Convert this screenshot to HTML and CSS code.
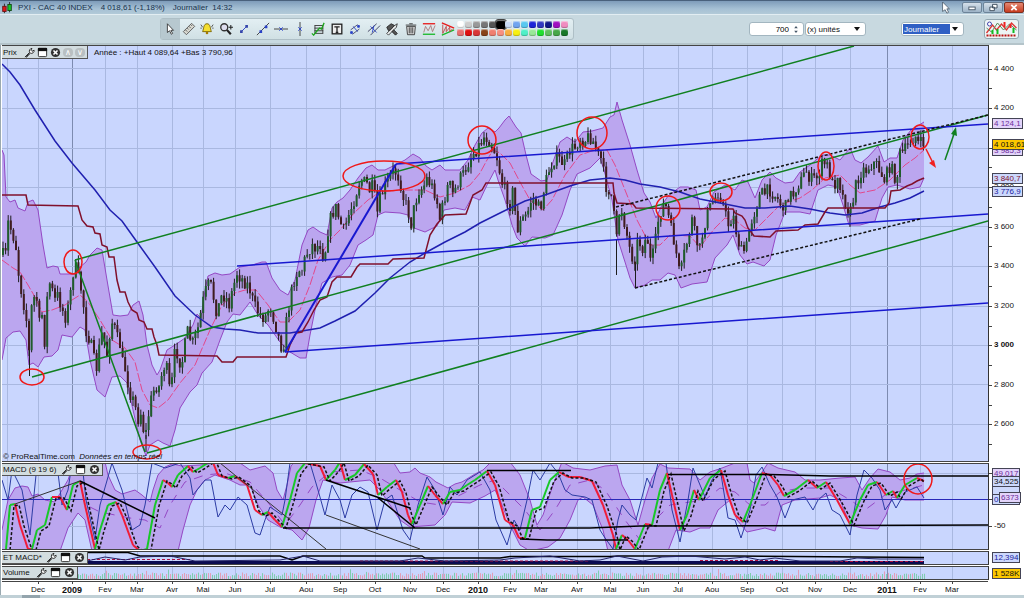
FILE: index.html
```html
<!DOCTYPE html>
<html lang="fr">
<head>
  <meta charset="UTF-8">
  <meta name="viewport" content="width=device-width, initial-scale=1.0">
  <title>PXI - CAC 40 INDEX</title>
  <link rel="stylesheet" href="styles.css">
</head>
<body>

<!-- shared icons -->
<svg class="sprite" aria-hidden="true">
  <symbol id="wrench" viewBox="0 0 12 12"><path d="M1 11l5-5M6.200 6a3 3 0 0 1 2.500-4.500L7.500 3.500l1.200 1.200L11 3.500A3 3 0 0 1 7 6.800L2.500 11.200z" fill="#fff" stroke="#222"/></symbol>
  <symbol id="window" viewBox="0 0 12 12"><rect x="1.500" y="1.500" width="9" height="9" rx="1" fill="#fff" stroke="#222"/><path d="M1 1h10v3.500H1z" fill="#111"/></symbol>
  <symbol id="close" viewBox="0 0 12 12"><circle cx="6" cy="6" r="5" fill="#333"/><path d="M3.800 3.800l4.400 4.400M8.200 3.800L3.800 8.200" stroke="#fff" stroke-width="1.700"/></symbol>
</svg>

<header class="titlebar">
  <svg class="logo" viewBox="0 0 14 14"><path d="M4 2v11M10 0v12" stroke="#222"/><rect x="2" y="5" width="4" height="6" fill="#e01818" stroke="#611"/><rect x="8" y="3" width="4" height="7" fill="#18c828" stroke="#141"/></svg>
  <span>PXI - CAC 40 INDEX</span>
  <span>4 018,61 (-1,18%)</span>
  <span>Journalier&nbsp; 14:32</span>
  <div class="window-buttons">
    <svg class="cursor" viewBox="0 0 10 14"><path d="M1 0v11l3-2 2 4 2-1-2-4h3z" fill="#fff" stroke="#345" stroke-width=".8"/></svg>
    <button aria-label="Réduire"><svg viewBox="0 0 18 10"><rect x="5.500" y="4.500" width="7" height="3" fill="#fff" stroke="#456"/></svg></button>
    <button aria-label="Restaurer"><svg viewBox="0 0 18 10"><path d="M8.500 1.500h5v4h-5zM5.500 4.500h5v4h-5z" fill="#fff" stroke="#345"/></svg></button>
    <button class="quit" aria-label="Fermer"><svg viewBox="0 0 18 10"><path d="M6 2l6 6M12 2L6 8" stroke="#fff" stroke-width="2"/></svg></button>
  </div>
</header>

<nav class="toolbar">
  <div class="tools">
    <div class="tool-list">
      <button class="active" aria-label="Pointeur"><svg viewBox="0 0 16 16"><path d="M5 2v10l2.500-2 2 4 1.500-1-2-3.500h3z" fill="#fff" stroke="#333"/></svg></button>
      <button aria-label="Règle"><svg viewBox="0 0 16 16"><path d="M1.500 11L11 1.500 14.500 5 5 14.500z" fill="#d8d8d0" stroke="#555"/><path d="M4 9l2 2M6 7l1.500 1.500M8 5l2 2M10 3l1.500 1.500" stroke="#555"/></svg></button>
      <button aria-label="Alarme"><svg viewBox="0 0 16 16"><path d="M8 2c4 0 3.500 5 5 9H3C4.500 7 4 2 8 2z" fill="#f5df30" stroke="#776000"/><circle cx="8" cy="12.500" r="1.500" fill="#a47a00"/><path d="M1 3l2 3M15 3l-2 3M.5 7H2M14 7h1.500" stroke="#444"/></svg></button>
      <button aria-label="Zoom"><svg viewBox="0 0 16 16"><circle cx="6" cy="6" r="4" fill="#dde" stroke="#333" stroke-width="1.500"/><path d="M9 9l4.500 5" stroke="#222" stroke-width="2.500"/><path d="M11 6h5M13.500 3.500v5" stroke="#222" stroke-width="1.200"/></svg></button>
      <button aria-label="Segment"><svg viewBox="0 0 16 16"><path d="M5 11l6-6" stroke="#2233cc"/><path d="M3.500 9.500h3v3h-3zM9.500 3.500h3v3h-3z" fill="#3344aa"/></svg></button>
      <button aria-label="Droite"><svg viewBox="0 0 16 16"><path d="M1 15L15 1" stroke="#333"/><path d="M4 9.500h3v3H4zM10 4h3v3h-3z" fill="#2840c8"/></svg></button>
      <button aria-label="Horizontale"><svg viewBox="0 0 16 16"><path d="M0 8h16" stroke="#333"/><path d="M6 6l4 4M10 6l-4 4" stroke="#2840c8"/></svg></button>
      <button aria-label="Verticale"><svg viewBox="0 0 16 16"><path d="M8 0v16" stroke="#333"/><path d="M6 6l4 4M10 6l-4 4" stroke="#2840c8"/></svg></button>
      <button aria-label="Retracement"><svg viewBox="0 0 16 16"><path d="M4 4h10M4 7h10M4 10h10M4 13h10M4.500 4v9M13.500 4v9" stroke="#333"/><path d="M7 10l3-3 2 1 3-7M1 13l2 2 4-5" fill="none" stroke="#1da51d" stroke-width="1.500"/></svg></button>
      <button aria-label="Texte"><svg viewBox="0 0 16 16"><rect x="2.500" y="2.500" width="11" height="11" fill="#eee" stroke="#222" stroke-width="1.500"/><path d="M5 5.500h6M8 5.500V12M6.500 12h3" stroke="#222" stroke-width="1.500"/></svg></button>
      <button aria-label="Parallèles"><svg viewBox="0 0 16 16"><path d="M3 9l8-6M5 14l8-6" stroke="#446"/><path d="M3 11h2v2H3zM11 4h2v2h-2zM6 5l5 6" fill="#2840c8" stroke="#2840c8"/></svg></button>
      <button aria-label="Canal"><svg viewBox="0 0 16 16"><path d="M1 11L11 2M4 15L15 4" stroke="#335"/><path d="M4 5l7 7M8 4l-2 8" stroke="#2840c8"/></svg></button>
      <button aria-label="Outils"><svg viewBox="0 0 16 16"><path d="M2 6l5-4 4 2-3 3 6 6-2 2-6-6-2 1z" fill="#555" stroke="#222"/><path d="M3 14L13 4" stroke="#eee" stroke-width="2"/><path d="M2 13l9-9 3-2-1 4-9 9z" fill="none" stroke="#333"/></svg></button>
      <button aria-label="Supprimer"><svg viewBox="0 0 16 16"><path d="M3 5h10l-1 9.500H4z" fill="#ddd" stroke="#333"/><path d="M2 3.500h12M6 2h4M6 6v7M8 6v7M10 6v7" stroke="#333"/></svg></button>
      <button aria-label="Support"><svg viewBox="0 0 16 16"><path d="M1 2h14" stroke="#e81818" stroke-width="1.500"/><path d="M1 14h14" stroke="#18b828" stroke-width="1.500"/><path d="M2 12l2-7 3 5 3-6 2 7 3-7" fill="none" stroke="#a77"/></svg></button>
      <button aria-label="Triangle"><svg viewBox="0 0 16 16"><path d="M1 1l14 6" stroke="#e81818" stroke-width="1.500"/><path d="M1 15l14-6" stroke="#18b828" stroke-width="1.500"/><path d="M2 3v10l4-8v6l4-5v5l3-3" fill="none" stroke="#b44"/></svg></button>
    </div>
    <div class="palette" id="palette"></div>
  </div>
  <div class="settings">
    <div class="field units">
      <input type="text" value="700" aria-label="Nombre d'unités">
      <svg class="spin" viewBox="0 0 6 10"><path d="M1 3.500L3 1l2 2.500zM1 6.500L3 9l2-2.500z" fill="#456"/></svg>
    </div>
    <div class="field drop">
      <select aria-label="Unité"><option>(x) unités</option></select>
    </div>
    <div class="field drop period">
      <select aria-label="Période"><option>Journalier</option></select>
    </div>
    <button class="chart-button" aria-label="Graphiques"><svg viewBox="0 0 32 16"><path d="M1 12l6-8 4 5 5-6 5 6 5-7 5 5" fill="none" stroke="#d33" stroke-width="1.300"/><path d="M1 7l5 4 6-9 6 7 6-6 7 6" fill="none" stroke="#5a8a5a"/><path d="M7 9v4M12 8v5M28 7v5" stroke="#1b2" stroke-width="2"/><path d="M19 1v5M25 3v4" stroke="#e22" stroke-width="2"/><path d="M1 14.500h30" stroke="#b11" stroke-width="2" stroke-dasharray="2 1"/><circle cx="4" cy="3" r="2" fill="#fff" stroke="#44a"/></svg></button>
  </div>
</nav>

<main class="charts">
  <section class="panel price">
    <div class="plot">
      <svg id="price" viewBox="2 46 986 415" preserveAspectRatio="none">
        <g class="grid"></g>
        <g class="series"></g>
        <g class="trend green">
          <path d="M75 260L854 46M32 377L988 115M147 453L988 221M75 260L145 452"/>
        </g>
        <g class="trend blue">
          <path d="M237 266L988 214M396 164L988 124M285 352L988 303"/>
          <path class="thick" d="M285 352L396 164"/>
        </g>
        <path class="dotted" d="M616 207L988 115M635 288L920 219"/>
        <g class="marks">
          <ellipse cx="73" cy="262" rx="9" ry="12"/>
          <ellipse cx="32" cy="377" rx="12" ry="8"/>
          <ellipse cx="147" cy="452" rx="14" ry="7"/>
          <ellipse cx="384" cy="176" rx="41" ry="15"/>
          <circle cx="482" cy="140" r="14"/>
          <ellipse cx="592" cy="133" rx="15" ry="16"/>
          <circle cx="668" cy="208" r="12"/>
          <ellipse cx="721" cy="192" rx="11" ry="9"/>
          <ellipse cx="826" cy="166" rx="8" ry="14"/>
          <ellipse cx="920" cy="137" rx="9" ry="12"/>
        </g>
        <path d="M926 149l7 14" stroke="#f02020" stroke-width="1.500"/><path d="M936 168l-7-5 5-3z" fill="#f02020"/>
        <path d="M945 160l9-26" stroke="#108020" stroke-width="1.500"/><path d="M956 127l1 9-6-2z" fill="#108020"/>
      </svg>
      <div class="head">Prix
        <button aria-label="Réglages"><svg><use href="#wrench"/></svg></button>
        <button aria-label="Fenêtre"><svg><use href="#window"/></svg></button>
        <button aria-label="Fermer"><svg><use href="#close"/></svg></button>
        <button class="move" aria-label="Monter">∧</button>
        <button class="move" aria-label="Descendre">∨</button>
      </div>
      <p class="info">Année : +Haut 4 089,64 +Bas 3 790,96</p>
      <p class="credit">© ProRealTime.com &nbsp;<em>Données en temps réel</em></p>
    </div>
    <div class="axis" id="price-axis"></div>
  </section>

  <section class="panel macd">
    <div class="plot">
      <svg id="macd" viewBox="2 464 986 85" preserveAspectRatio="none">
        <g class="grid"></g>
        <g class="series"></g>
        <path class="thin" d="M15 504L80 481M220 463L326 549M326 515L420 549"/>
        <path class="bold" d="M80 481L155 518M326 480L410 508M377 497L415 528M283 528L590 528L640 526L988 525M487 470.500H571M520 539L547 540H628M668 474.500H770L830 476H988"/>
        <g class="marks"><ellipse cx="918" cy="479" rx="14" ry="15"/></g>
      </svg>
      <div class="head wide">MACD (9 19 6)
        <button aria-label="Réglages"><svg><use href="#wrench"/></svg></button>
        <button aria-label="Fenêtre"><svg><use href="#window"/></svg></button>
        <button aria-label="Fermer"><svg><use href="#close"/></svg></button>
      </div>
    </div>
    <div class="axis" id="macd-axis"></div>
  </section>

  <section class="panel et">
    <div class="plot">
      <svg id="et" viewBox="2 552 986 12" preserveAspectRatio="none">
        <g class="grid"></g>
        <path d="M87 562.500H924" stroke="#0a0a50" stroke-width="3"/>
        <path d="M87 559.500H190M360 561H590M700 560.500H780M830 561.500H924" fill="none" stroke="#b01040" stroke-width="1" stroke-dasharray="3 2"/>
        <path d="M87 552.500H128L140 556H280L292 560L303 556H422L425 558H500L510 556.500H610L618 556L735 556L924 557.500" fill="none" stroke="#000" stroke-width="1.500"/>
        <path d="M87 561L105 557L125 560L140 557L170 556L195 561L280 560L303 556L320 561L400 561L418 558L445 561L500 560L515 558L550 556L580 561L600 560L617 556L643 561L662 557L690 556L725 559L745 557L760 560L775 558L800 561L840 561L857 558L880 559L924 559" fill="none" stroke="#226"/>
      </svg>
      <div class="head">ET MACD*
        <button aria-label="Réglages"><svg><use href="#wrench"/></svg></button>
        <button aria-label="Fenêtre"><svg><use href="#window"/></svg></button>
        <button aria-label="Fermer"><svg><use href="#close"/></svg></button>
      </div>
    </div>
    <div class="axis" id="et-axis"></div>
  </section>

  <section class="panel volume">
    <div class="plot">
      <svg id="volume" viewBox="2 567 986 13" preserveAspectRatio="none">
        <g class="grid"></g>
        <g class="series"></g>
      </svg>
      <div class="head">Volume
        <button aria-label="Réglages"><svg><use href="#wrench"/></svg></button>
        <button aria-label="Fenêtre"><svg><use href="#window"/></svg></button>
        <button aria-label="Fermer"><svg><use href="#close"/></svg></button>
      </div>
    </div>
    <div class="axis" id="volume-axis"></div>
  </section>

  <div class="months" id="months"></div>
</main>

<footer class="scrollbar"><span></span></footer>

<script src="chart.js"></script>
</body>
</html>
```
FILE: styles.css
```css
* {
  box-sizing: border-box;
}

body {
  margin: 0;
  min-height: 100vh;
  display: flex;
  flex-direction: column;
  background: #c6d6dc;
  font-family: "Liberation Sans", Arial, sans-serif;
  font-size: 8px;
  color: #111;
}

button {
  padding: 0;
  border: 0;
  background: none;
  font: inherit;
}

svg {
  display: block;
}

p {
  margin: 0;
}

.sprite {
  position: absolute;
  width: 0;
  height: 0;
}

/* title bar */
.titlebar {
  height: 14px;
  display: flex;
  align-items: center;
  gap: 8px;
  padding-left: 1px;
  border-top: 1px solid #49617c;
  background: linear-gradient(#7e9cba, #a5c0d4 60%, #b2cad8);
  color: #18324c;
}

.logo {
  width: 12px;
  height: 12px;
  margin-right: -3px;
}

.window-buttons {
  display: flex;
  align-items: center;
  gap: 1px;
  margin-left: auto;
}

.window-buttons button {
  width: 20px;
  height: 11px;
  border: 1px solid #6d8499;
  border-radius: 2px;
  background: linear-gradient(#d5e0ea, #9eb4c8);
}

.window-buttons .quit {
  border-color: #803020;
  background: linear-gradient(#e58a74, #c83c20);
}

.window-buttons svg {
  width: 100%;
  height: 9px;
}

.window-buttons .cursor {
  width: 10px;
  height: 12px;
  margin-right: 10px;
}

/* toolbar */
.toolbar {
  height: 31px;
  display: flex;
  align-items: center;
  justify-content: space-between;
  padding: 0 5px 0 160px;
  border-top: 1px solid #e2edf2;
  border-bottom: 2px solid #b4c4ca;
  background: #c8d9e0;
}

.tools {
  display: flex;
  align-items: center;
  height: 22px;
  padding-right: 4px;
  border: 1px solid #aebfc6;
  border-radius: 3px;
  background: linear-gradient(#e3eff3, #d0e0e4);
}

.tool-list {
  width: 296px;
  height: 20px;
  display: grid;
  grid-template-columns: repeat(16, 1fr);
}

.tool-list button {
  display: grid;
  place-items: center;
}

.tool-list .active {
  background: #b7c8cf;
}

.tool-list svg {
  width: 14px;
  height: 14px;
  fill: none;
}

.palette {
  display: grid;
  grid-template-columns: repeat(14, 8px);
  grid-auto-rows: 8px;
}

.swatch {
  margin: 0 1px 1px 0;
  border-radius: 2px;
  box-shadow: inset 0 1px 1px rgba(255, 255, 255, 0.5), inset 0 -1px 1px rgba(0, 0, 0, 0.25);
}

.swatch.current {
  margin: -1px -1px 0 -1px;
  background: #000;
  outline: 1px solid #444;
}

.settings {
  display: flex;
  align-items: center;
}

.field {
  display: flex;
  align-items: center;
  height: 14px;
  border: 1px solid #a3b6c0;
  border-radius: 3px;
  background: #fff;
}

.units {
  width: 55px;
}

.field input {
  flex: 1;
  min-width: 0;
  border: 0;
  padding: 0 0 0 2px;
  background: none;
  font: inherit;
  text-align: right;
}

.spin {
  width: 6px;
  height: 9px;
  margin: 0 4px;
}

.drop {
  position: relative;
  width: 61px;
  margin-left: 1px;
}

.drop select {
  width: 100%;
  height: 12px;
  padding: 0 12px 0 1px;
  border: 0;
  appearance: none;
  background: none;
  font: inherit;
  color: #111;
}

.drop::after {
  content: "";
  position: absolute;
  right: 5px;
  top: 4px;
  border: 3px solid transparent;
  border-top: 4px solid #111;
  border-bottom: 0;
}

.period {
  width: 63px;
  margin-left: 35px;
  padding: 0 1px;
}

.period select {
  height: 10px;
  background: linear-gradient(90deg, #2f5fc4 47px, #fff 47px);
  color: #fff;
}

.chart-button {
  width: 35px;
  height: 20px;
  margin-left: 20px;
  border: 1px solid #92a6b0;
  border-radius: 3px;
  background: #edf4f5;
}

.chart-button svg {
  width: 100%;
  height: 16px;
}

/* chart panels */
.charts {
  flex: 1;
  display: flex;
  flex-direction: column;
  gap: 1px;
  padding-left: 1px;
  border-left: 1px solid #9aa9b0;
  background: #fff;
}

.panel {
  display: grid;
  grid-template-columns: 1fr 35px;
}

.price {
  flex: 1;
}

.macd {
  height: 87px;
}

.et {
  height: 14px;
}

.volume {
  height: 14px;
}

.plot {
  position: relative;
  min-height: 0;
  border-top: 1px solid #444;
  border-bottom: 1px solid #444;
  border-right: 1px solid #333;
  background: #c9d6fe;
}

.plot > svg {
  position: absolute;
  width: 100%;
  height: 100%;
}

.grid line {
  stroke: #a9b8e0;
}

.grid .year {
  stroke: #7d8bb0;
}

.band {
  fill: #bba6ef;
  stroke: none;
}

.edge {
  fill: none;
  stroke: #9448c4;
  stroke-width: 1;
}

.middle {
  fill: none;
  stroke: #e2488c;
  stroke-width: 1;
  stroke-dasharray: 9 2;
}

.average {
  fill: none;
  stroke: #2020b0;
  stroke-width: 1.5;
}

.stop {
  fill: none;
  stroke: #80102c;
  stroke-width: 1.5;
}

.wick {
  fill: none;
  stroke: #1c1c1c;
  stroke-width: 1;
}

.up {
  fill: none;
  stroke: #205c2c;
  stroke-width: 2;
}

.down {
  fill: none;
  stroke: #401c20;
  stroke-width: 2;
}

.trend path {
  fill: none;
  stroke-width: 1.5;
}

.green path {
  stroke: #108020;
}

.blue path {
  stroke: #1818d0;
}

.blue .thick {
  stroke-width: 2;
}

.dotted {
  fill: none;
  stroke: #111;
  stroke-width: 1.5;
  stroke-dasharray: 3 2;
}

.marks ellipse,
.marks circle {
  fill: none;
  stroke: #f01818;
  stroke-width: 1.5;
}

.rise {
  fill: none;
  stroke: #18c828;
  stroke-width: 2;
}

.fall {
  fill: none;
  stroke: #f01c38;
  stroke-width: 2;
}

.signal {
  fill: none;
  stroke: #111;
  stroke-width: 1.5;
  stroke-dasharray: 3 2;
}

.oscillator {
  fill: none;
  stroke: #2c3ca4;
}

.zero {
  stroke: #2828b8;
}

.thin {
  fill: none;
  stroke: #333;
}

.bold {
  fill: none;
  stroke: #000;
  stroke-width: 1.5;
}

.buy {
  stroke: #7cccac;
}

.sell {
  stroke: #e29cb4;
}

/* title strip lying over each plot */
.head {
  position: absolute;
  top: 0;
  left: 0;
  display: flex;
  align-items: center;
  gap: 3px;
  height: 12px;
  padding: 0 2px 0 1px;
  border: 1px solid #555;
  border-top: 0;
  border-left: 0;
  background: #d3dde0;
  white-space: nowrap;
}

.price .head {
  width: 86px;
  height: 13px;
  gap: 2px;
}

.head button:first-of-type {
  margin-left: auto;
}

.head svg {
  width: 11px;
  height: 11px;
}

.wide {
  width: 101px;
}

.et .head {
  width: 86px;
}

.volume .head {
  width: 76px;
}

.move {
  width: 10px;
  height: 9px;
  border-radius: 4px;
  background: #b9c0c2;
  color: #fff;
  line-height: 9px;
}

.info {
  position: absolute;
  top: 2px;
  left: 92px;
}

.credit {
  position: absolute;
  bottom: 0;
  left: 1px;
}

/* axes */
.axis {
  position: relative;
}

.label {
  position: absolute;
  left: 5px;
  height: 10px;
  margin-top: -5px;
  line-height: 10px;
  white-space: nowrap;
}

.tick {
  position: absolute;
  left: 0;
  width: 3px;
  height: 1px;
  background: #444;
}

.strong {
  font-weight: bold;
}

.box {
  left: 3px;
  height: 11px;
  padding: 0 1px;
  line-height: 9px;
  border: 1px solid #445;
  background: #ccd8fc;
}

.purple {
  background: #e3d4fa;
  color: #6b2c9c;
}

.red {
  color: #80102c;
}

.navy {
  color: #2020a0;
}

.yellow {
  background: #fcc800;
  color: #111;
}

.full {
  width: 28px;
}

.inner {
  left: 10px;
}

.months {
  position: relative;
  height: 14px;
  margin-right: 36px;
  border-top: 1px solid #444;
}

.month {
  position: absolute;
  top: 3px;
  width: 30px;
  margin-left: -15px;
  text-align: center;
  line-height: 10px;
}

.month::before {
  content: "";
  position: absolute;
  left: 15px;
  top: -3px;
  height: 2px;
  border-left: 1px solid #444;
}

.month.strong {
  font-size: 9px;
}

.scrollbar {
  height: 3px;
  padding-left: 22px;
  background: #c0d0d6;
}

.scrollbar span {
  display: block;
  width: 18px;
  height: 3px;
  background: #93a4ac;
}
```
FILE: chart.js
```js
const NS = 'http://www.w3.org/2000/svg';

const months = [
  [38, 'Dec'], [72, '2009'], [105, 'Fev'], [137, 'Mar'], [172, 'Avr'], [203, 'Mai'],
  [235, 'Jun'], [270, 'Jul'], [306, 'Aou'], [340, 'Sep'], [375, 'Oct'], [410, 'Nov'],
  [443, 'Dec'], [478, '2010'], [510, 'Fev'], [541, 'Mar'], [577, 'Avr'], [610, 'Mai'],
  [643, 'Jun'], [678, 'Jul'], [712, 'Aou'], [747, 'Sep'], [782, 'Oct'], [815, 'Nov'],
  [850, 'Dec'], [887, '2011'], [920, 'Fev'], [952, 'Mar']
];

const price = '3,255 5,262 9,213 12,240 15,232 17,262 20,283 23,300 26,315 29,352 31,310 34,298 37,300 40,330 42,315 45,345 47,300 50,282 52,290 55,300 58,295 61,305 65,318 68,308 71,290 73,273 75,265 77,273 80,283 83,300 86,330 90,340 94,360 96,372 99,350 101,332 104,340 107,355 110,330 113,320 116,335 120,345 123,365 126,370 129,390 133,400 136,410 139,422 141,412 145,440 147,425 150,405 153,392 157,385 160,388 163,365 167,370 170,393 173,375 175,350 179,355 181,370 184,350 188,330 192,345 196,335 199,325 202,305 206,290 210,282 213,295 217,313 221,297 225,295 229,305 233,288 237,273 241,278 247,284 250,290 254,305 260,315 265,318 270,305 275,322 280,343 283,350 286,325 290,300 294,280 298,270 302,270 306,255 312,245 316,248 320,243 324,260 328,230 332,213 336,208 340,222 344,232 348,217 353,203 357,190 360,180 364,182 368,185 371,195 373,182 377,215 380,200 384,188 388,182 392,172 397,172 401,185 404,200 408,210 411,225 415,203 419,190 423,188 427,178 432,187 436,195 440,220 444,200 449,182 453,195 459,180 463,175 467,165 472,155 478,147 484,137 488,138 493,147 498,160 501,180 505,190 510,205 513,190 517,230 522,220 527,215 532,197 537,205 540,210 545,185 550,167 555,158 560,160 565,165 570,150 575,147 580,138 585,140 590,136 595,145 598,155 602,160 605,185 609,190 613,200 616,250 618,215 622,210 626,230 630,250 634,262 638,240 643,248 647,235 651,265 655,245 659,215 663,205 667,208 670,225 675,245 680,278 684,255 688,238 692,220 696,240 700,250 704,225 709,210 714,200 719,190 723,205 728,225 733,215 737,235 741,252 746,250 750,225 755,210 760,195 765,193 770,190 775,195 780,203 785,210 788,195 793,195 797,185 802,180 806,170 811,180 817,178 822,165 826,163 829,170 832,185 835,183 838,172 842,195 847,205 850,215 854,195 857,180 862,170 866,170 872,163 877,165 882,175 885,180 890,165 894,175 897,180 899,155 903,152 907,148 911,140 915,135 919,145 924,142';
const upper = '2,150 4,155 6,197 10,202 15,200 18,208 25,211 28,202 33,200 38,210 43,245 47,268 53,266 58,267 60,274 75,274 80,267 86,262 90,255 97,248 102,250 107,280 113,315 120,316 128,315 133,305 139,301 143,315 147,345 152,365 157,375 160,370 167,350 175,345 185,338 193,325 197,314 201,318 205,290 208,276 215,273 222,275 230,274 240,267 252,265 262,262 266,262 272,278 280,290 288,295 295,280 302,245 308,230 313,227 320,232 327,235 332,208 337,202 343,198 350,190 358,178 366,168 372,165 378,170 385,170 395,165 405,160 413,154 420,158 426,166 432,170 440,165 445,170 460,170 468,160 475,145 482,133 488,128 495,132 499,128 505,120 509,116 516,127 521,133 526,155 531,174 541,181 547,180 553,162 560,142 567,137 575,142 583,132 592,131 603,128 610,117 614,115 617,102 622,120 630,145 637,170 644,193 650,202 656,218 662,205 668,196 680,187 688,187 696,190 700,210 707,207 714,192 725,185 735,190 742,180 748,182 755,198 762,180 770,172 776,178 785,183 793,182 800,172 810,165 822,155 830,155 840,160 850,148 855,160 861,163 868,157 878,146 884,162 890,158 897,158 903,140 911,130 924,122';
const lower = '2,360 6,338 13,332 20,331 26,340 29,365 33,363 38,367 44,357 52,356 58,350 62,335 72,337 80,327 85,330 90,360 97,390 105,397 112,377 120,376 127,383 133,410 140,440 146,456 150,445 158,440 163,443 170,446 175,430 180,408 190,392 197,385 202,373 212,362 220,340 227,322 233,314 240,315 250,302 258,315 268,325 280,342 290,352 300,358 306,358 310,335 316,305 322,283 332,277 342,275 350,265 358,245 366,240 373,235 378,215 385,212 400,213 408,215 414,228 425,232 437,226 444,210 455,208 465,210 472,197 480,200 487,185 495,170 498,180 505,200 512,225 517,238 525,246 532,237 545,238 553,235 562,215 570,190 577,174 590,168 600,158 604,170 612,200 618,240 625,262 630,278 635,288 645,285 652,280 660,280 668,273 675,275 681,288 692,284 707,282 715,258 727,245 733,235 740,255 747,264 753,262 764,266 770,260 776,235 785,212 800,212 810,214 818,190 828,185 837,187 843,205 849,225 860,225 875,221 882,198 888,187 897,185 910,189 920,187 924,178';
const middle = '2,260 13,268 20,272 28,285 35,297 42,312 52,310 65,305 72,300 80,295 88,302 100,320 112,340 125,348 135,362 142,390 150,405 158,408 168,400 180,383 195,365 210,330 222,305 235,293 245,290 256,290 268,305 280,322 288,322 300,310 310,285 318,260 330,240 340,230 355,212 368,200 380,192 400,190 425,190 440,197 455,193 470,185 480,173 487,160 493,150 500,153 510,163 520,182 530,200 543,210 552,200 565,175 580,155 595,150 607,150 615,165 625,190 637,220 650,245 660,245 670,235 690,236 700,247 715,228 725,218 735,220 745,228 755,230 765,220 780,205 800,198 812,190 825,178 840,175 850,185 860,193 875,190 890,180 905,165 915,158 924,150';
const average = '2,64 10,72 20,85 35,110 55,141 72,163 95,190 110,210 122,221 137,242 155,267 175,296 195,315 212,327 225,329 240,330 258,333 290,333 320,328 335,321 355,311 375,293 390,278 410,262 425,253 445,242 465,232 480,223 500,213 525,201 545,195 570,186 590,180 610,178 625,180 640,184 660,187 680,192 700,199 720,203 745,208 765,208 790,206 810,209 830,213 845,215 862,213 880,207 895,203 910,198 924,191';
const stop = '2,195 26,195 28,205 78,206 82,220 87,226 93,227 95,233 100,234 102,245 107,247 109,257 114,257 117,280 120,292 125,292 128,302 132,310 137,313 139,320 144,322 147,329 152,329 154,337 157,345 159,355 217,356 222,362 233,362 237,357 286,357 290,345 296,333 302,332 308,322 314,310 320,300 327,297 332,282 337,277 351,277 357,267 360,264 388,264 393,259 424,258 430,235 437,224 445,215 466,214 473,195 482,190 486,183 613,183 614,193 617,203 633,204 636,208 733,209 735,213 742,216 745,220 748,228 754,236 770,237 776,231 798,230 805,225 818,224 825,212 828,208 885,208 889,203 891,191 900,190 907,186 912,184 917,181 924,178';

const macd = '6,549 10,505 15,504 20,525 28,549 32,549 37,530 45,525 52,497 60,497 67,510 73,485 80,481 85,505 95,549 100,530 108,505 116,502 122,515 133,545 140,551 147,549 155,505 163,480 168,483 172,487 178,475 188,466 193,472 200,468 212,460 218,475 228,478 235,476 247,485 255,510 262,515 268,512 275,520 282,527 290,500 297,473 305,463 320,466 326,480 335,470 340,462 345,480 355,475 364,464 373,474 378,495 387,487 396,480 402,492 408,515 412,524 420,505 428,486 435,495 443,504 450,492 460,490 467,485 475,480 487,471 495,485 505,520 513,525 519,538 525,538 532,510 540,507 550,480 559,472 568,477 580,477 592,481 603,505 613,535 616,549 622,535 628,540 635,549 645,524 652,525 660,490 667,473 672,495 680,530 687,515 694,490 699,500 710,478 721,470 728,495 735,515 743,522 750,505 762,473 770,475 778,485 784,496 795,490 808,480 817,488 826,482 837,500 850,524 860,500 868,485 877,482 886,495 893,491 897,498 905,485 917,478 924,481';
const macdUpper = '2,530 8,500 15,488 22,486 28,487 32,496 38,494 45,500 55,502 62,490 68,480 74,462 105,462 108,475 115,490 122,494 135,490 142,495 150,502 153,490 158,475 165,467 172,464 182,466 200,465 215,463 240,463 250,470 265,466 273,473 277,490 283,500 287,485 291,466 296,460 392,460 400,473 410,472 415,468 420,473 430,477 436,482 448,488 455,484 462,482 475,474 483,470 493,460 510,462 520,475 530,500 537,525 543,515 553,485 562,462 573,468 590,470 605,466 617,465 622,485 630,500 638,525 645,500 652,478 660,464 668,468 690,469 700,480 710,472 722,468 735,463 747,463 750,480 754,483 760,475 768,463 778,468 795,472 805,480 820,480 840,478 855,477 862,490 870,478 878,469 890,472 900,480 910,478 917,474 924,473';
const macdLower = '2,551 60,551 68,528 78,513 85,520 92,551 178,551 183,530 190,505 197,490 205,480 215,475 230,480 240,485 250,485 258,505 268,520 280,527 292,530 302,540 309,528 316,500 323,480 340,483 370,480 380,490 390,505 400,520 410,527 435,525 445,515 452,502 470,503 485,496 495,490 500,500 510,525 520,545 530,551 548,547 560,538 570,520 578,500 583,497 593,505 603,530 608,551 668,551 676,530 690,532 700,528 710,528 718,510 730,500 737,520 747,532 765,528 775,531 782,505 795,500 820,498 830,495 840,500 850,525 862,528 878,529 886,515 892,497 905,500 924,500';
const oscillator = '2,480 8,500 12,470 22,490 30,535 37,465 43,475 48,463 57,465 62,505 68,490 72,463 82,463 86,500 95,540 100,505 112,463 122,490 132,530 140,525 145,505 152,463 165,468 180,463 190,478 193,495 205,480 211,480 218,517 225,505 230,510 238,497 247,505 255,533 260,535 265,520 270,507 282,515 285,500 290,463 310,463 318,490 325,515 332,485 340,500 345,518 352,495 360,487 368,492 377,530 385,500 392,495 403,530 410,540 418,505 427,477 435,490 443,515 450,487 457,495 467,480 480,472 490,490 496,520 507,545 514,520 520,530 527,500 533,470 540,480 550,463 558,473 565,490 572,495 585,497 592,500 600,530 605,538 613,549 618,520 622,505 630,515 636,520 647,478 652,488 658,463 666,463 672,510 680,542 688,500 693,468 705,497 712,480 720,468 728,518 735,520 741,538 750,510 756,475 762,467 770,485 777,497 785,518 792,500 805,497 813,510 818,500 826,493 832,510 840,515 850,535 857,495 864,470 872,478 880,490 885,510 892,500 896,508 905,492 917,487 924,498';
const macdMiddle = '90,507 100,512 115,515 130,518 145,520 160,528 170,505 185,482 205,475 225,473 250,482 270,505 285,525 300,505 312,487 330,472 360,470 380,478 400,490 420,502 440,505 460,495 480,485 495,480 510,495 525,510 540,530 555,510 570,485 590,480 605,490 625,520 640,540 655,520 670,505 690,502 705,500 720,488 735,492 750,505 765,505 780,492 800,488 830,488 850,500 865,510 885,495 905,490 924,485';

function parse(text) {
  return text.split(' ').map(p => p.split(',').map(Number));
}

function add(parent, tag, attrs) {
  const el = document.createElementNS(NS, tag);
  for (const key in attrs) el.setAttribute(key, attrs[key]);
  parent.appendChild(el);
  return el;
}

// repeatable noise, so the bars are the same at each load
let seed = 7;
function noise() {
  seed = (seed * 16807) % 2147483647;
  return seed / 2147483647;
}

function valueAt(points, x) {
  for (let i = 1; i < points.length; i++) {
    if (x <= points[i][0]) {
      const [x0, y0] = points[i - 1];
      const [x1, y1] = points[i];
      return y0 + (y1 - y0) * (x - x0) / (x1 - x0);
    }
  }
  return points[points.length - 1][1];
}

function drawGrid(id, rows) {
  const svg = document.getElementById(id);
  const grid = svg.querySelector('.grid');
  const box = svg.viewBox.baseVal;
  [[7, '']].concat(months).forEach(([x, name]) => {
    add(grid, 'line', {
      x1: x + 0.5, x2: x + 0.5, y1: box.y, y2: box.y + box.height,
      class: name.startsWith('20') ? 'year' : ''
    });
  });
  rows.forEach(y => add(grid, 'line', { x1: 2, x2: 988, y1: y + 0.5, y2: y + 0.5 }));
}

function drawBand(group, top, bottom) {
  const back = parse(bottom).reverse().map(p => p.join(',')).join(' ');
  add(group, 'polygon', { points: top + ' ' + back, class: 'band' });
  add(group, 'polyline', { points: top, class: 'edge' });
  add(group, 'polyline', { points: bottom, class: 'edge' });
}

function drawPrice() {
  drawGrid('price', [68, 108, 148, 187, 226, 266, 306, 345, 384, 424]);
  const group = document.querySelector('#price .series');
  drawBand(group, upper, lower);
  add(group, 'polyline', { points: middle, class: 'middle' });

  const points = parse(price);
  let wick = '', up = '', down = '';
  let last = points[0][1];
  for (let x = 3; x <= 924; x += 2.6) {
    const close = valueAt(points, x) + (noise() - 0.5) * 14;
    const high = Math.min(last, close) - noise() * 7;
    const low = Math.max(last, close) + noise() * 7;
    wick += `M${x.toFixed(1)} ${high.toFixed(1)}V${low.toFixed(1)}`;
    const body = `M${x.toFixed(1)} ${last.toFixed(1)}V${close.toFixed(1)}`;
    if (close < last) up += body; else down += body;
    last = close;
  }
  wick += 'M29.5 350V376M616.5 240V275M635.5 262V287M850 210V227M146 435V452';
  add(group, 'path', { d: wick, class: 'wick' });
  add(group, 'path', { d: down, class: 'down' });
  add(group, 'path', { d: up, class: 'up' });
  add(group, 'polyline', { points: average, class: 'average' });
  add(group, 'polyline', { points: stop, class: 'stop' });
}

function drawMacd() {
  drawGrid('macd', [473, 526]);
  const group = document.querySelector('#macd .series');
  drawBand(group, macdUpper, macdLower);
  add(group, 'polyline', { points: macdMiddle, class: 'edge', 'stroke-dasharray': '9 8' });
  add(group, 'line', { x1: 2, x2: 988, y1: 499.5, y2: 499.5, class: 'zero' });
  add(group, 'polyline', { points: oscillator, class: 'oscillator' });
  const points = parse(macd);
  for (let i = 1; i < points.length; i++) {
    const [x0, y0] = points[i - 1];
    const [x1, y1] = points[i];
    add(group, 'path', { d: `M${x0} ${y0}L${x1} ${y1}`, class: y1 < y0 ? 'rise' : 'fall' });
  }
  const signal = points.map(([x, y]) => [Math.min(x + 4, 924), y + 1].join(',')).join(' ');
  add(group, 'polyline', { points: signal, class: 'signal' });
}

function drawVolume() {
  drawGrid('volume', []);
  const group = document.querySelector('#volume .series');
  for (let x = 78; x <= 924; x += 2) {
    const h = 3 + noise() * 4 + (noise() > 0.95 ? 4 : 0);
    add(group, 'line', {
      x1: x + 0.5, x2: x + 0.5, y1: 580, y2: (580 - h).toFixed(1),
      class: noise() > 0.5 ? 'buy' : 'sell'
    });
  }
}

// labels sit at their value's share of the axis height
function drawAxis(id, top, height, labels, ticks) {
  const axis = document.getElementById(id);
  ticks.forEach(y => {
    const tick = document.createElement('i');
    tick.className = 'tick';
    tick.style.top = (y - top) / height * 100 + '%';
    axis.appendChild(tick);
  });
  labels.forEach(([y, text, cls]) => {
    const label = document.createElement('span');
    label.className = 'label ' + (cls || '');
    label.textContent = text;
    label.style.top = (y - top) / height * 100 + '%';
    axis.appendChild(label);
  });
}

function drawMonths() {
  const row = document.getElementById('months');
  months.forEach(([x, name]) => {
    const label = document.createElement('span');
    label.className = 'month' + (name.startsWith('20') ? ' strong' : '');
    label.textContent = name;
    label.style.left = (x - 2) / 986 * 100 + '%';
    row.appendChild(label);
  });
}

function drawPalette() {
  const colors = ['#fff', '#ccc', '#999', '#777', '#555', '#000', '#cbdcf6', '#70a4f0', '#58c8f0', '#1c24d8', '#3038c0', '#101888', '#a010c0', '#f08cc0',
    '#e87070', '#e01010', '#d83838', '#884418', '#f08070', '#f89080', '#f8b040', '#f8f010', '#50f0c8', '#98e898', '#20e030', '#60c060', '#48a848', '#187828'];
  const palette = document.getElementById('palette');
  colors.forEach((color, i) => {
    const swatch = document.createElement('button');
    swatch.className = 'swatch' + (i === 5 ? ' current' : '');
    swatch.style.backgroundColor = color;
    swatch.setAttribute('aria-label', 'Couleur ' + (i + 1));
    palette.appendChild(swatch);
  });
}

const priceTicks = [];
for (let y = 68.5; y < 460; y += 19.77) priceTicks.push(y);

drawPrice();
drawMacd();
drawGrid('et', []);
drawVolume();
drawMonths();
drawPalette();
drawAxis('price-axis', 45, 417, [
  [69, '4 400'], [108, '4 200'], [187, '3 800'], [227, '3 600'], [266, '3 400'], [306, '3 200'],
  [345, '3 000', 'strong'], [385, '2 800'], [424, '2 600'],
  [123, '4 124,1', 'box purple'], [150, '3 985,3', 'box purple'], [144, '4 018,61', 'box yellow'],
  [178, '3 840,7', 'box red'], [191, '3 776,9', 'box navy']
], priceTicks);
drawAxis('macd-axis', 463, 87, [
  [526, '-50'], [490, '', 'box full'], [473, '49,017', 'box purple'], [481, '34,525', 'box'],
  [499, '0', 'box navy full'], [497, '6373', 'box purple inner']
], [473, 499, 526]);
drawAxis('et-axis', 551, 14, [[557, '12,394', 'box navy']], []);
drawAxis('volume-axis', 566, 14, [[573, '1 528K', 'box yellow']], []);
```
